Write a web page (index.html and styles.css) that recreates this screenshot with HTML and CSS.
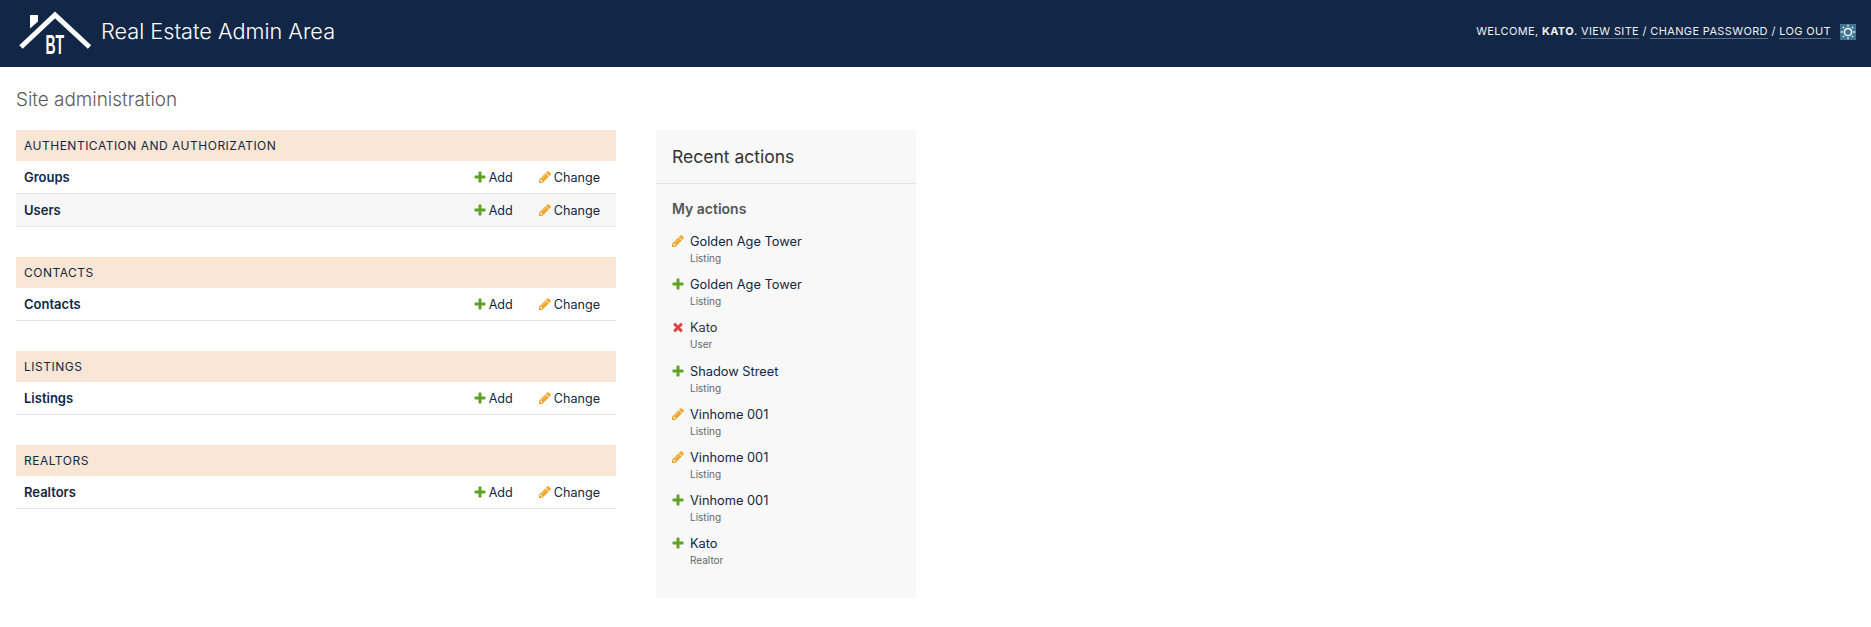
FILE: index.html
```html
<!DOCTYPE html>
<html lang="en">
<head>
<meta charset="utf-8">
<title>Site administration</title>
<link rel="stylesheet" href="styles.css">
</head>
<body>
<svg class="defs" width="0" height="0" aria-hidden="true">
  <symbol id="i-add" viewBox="0 0 1792 1792"><path d="M1600 796v192q0 40-28 68t-68 28h-416v416q0 40-28 68t-68 28h-192q-40 0-68-28t-28-68v-416h-416q-40 0-68-28t-28-68v-192q0-40 28-68t68-28h416v-416q0-40 28-68t68-28h192q40 0 68 28t28 68v416h416q40 0 68 28t28 68z"/></symbol>
  <symbol id="i-change" viewBox="0 0 1792 1792"><path d="M491 1536l91-91-235-235-91 91v107h128v128h107zm523-928q0-22-22-22-10 0-17 7l-542 542q-7 7-7 17 0 22 22 22 10 0 17-7l542-542q7-7 7-17zm-54-192l416 416-832 832h-416v-416zm683 96q0 53-37 90l-166 166-416-416 166-165q36-38 90-38 53 0 91 38l235 234q37 39 37 91z"/></symbol>
  <symbol id="i-del" viewBox="0 0 1792 1792"><path d="M1490 1322q0 40-28 68l-136 136q-28 28-68 28t-68-28l-294-294-294 294q-28 28-68 28t-68-28l-136-136q-28-28-28-68t28-68l294-294-294-294q-28-28-28-68t28-68l136-136q28-28 68-28t68 28l294 294 294-294q28-28 68-28t68 28l136 136q28 28 28 68t-28 68l-294 294 294 294q28 28 28 68z"/></symbol>
</svg>

<header class="topbar">
  <div class="brand">
    <svg class="logo" viewBox="0 0 74 44" width="74" height="44" aria-hidden="true">
      <polygon points="12,5 20,5 20,11.5 12,18.5" fill="#fff"/>
      <polyline points="3,37 37,5 71.5,37" fill="none" stroke="#fff" stroke-width="5"/>
      <text class="logo-text" transform="translate(27.5 43.5) scale(.5 1)">BT</text>
    </svg>
    <span class="brand-name">Real Estate Admin Area</span>
  </div>
  <div class="tools">
    <div class="tool-links">Welcome, <strong>Kato</strong>. <a href="#">View site</a> / <a href="#">Change password</a> / <a href="#">Log out</a></div>
    <span class="theme">
      <svg viewBox="0 0 16 16" width="16" height="16" aria-hidden="true">
        <circle cx="8" cy="8" r="3.6" fill="none" stroke="#fff" stroke-width="1.5"/>
        <g stroke="#e8f0f4" stroke-width="1.3">
          <path d="M8 .8v2M8 13.2v2M.8 8h2M13.2 8h2M2.9 2.9l1.3 1.3M11.8 11.8l1.3 1.3M2.9 13.1l1.3-1.3M11.8 4.2l1.3-1.3"/>
        </g>
      </svg>
    </span>
  </div>
</header>

<main class="content">
  <h1 class="page-title">Site administration</h1>
  <div class="columns">
    <div class="apps">
      <section class="module">
        <h2 class="caption">Authentication and Authorization</h2>
        <div class="row"><span class="model">Groups</span><a class="act act-add" href="#"><svg class="ico add"><use href="#i-add"/></svg>Add</a><a class="act act-change" href="#"><svg class="ico change"><use href="#i-change"/></svg>Change</a></div>
        <div class="row alt"><span class="model">Users</span><a class="act act-add" href="#"><svg class="ico add"><use href="#i-add"/></svg>Add</a><a class="act act-change" href="#"><svg class="ico change"><use href="#i-change"/></svg>Change</a></div>
      </section>
      <section class="module">
        <h2 class="caption">Contacts</h2>
        <div class="row"><span class="model">Contacts</span><a class="act act-add" href="#"><svg class="ico add"><use href="#i-add"/></svg>Add</a><a class="act act-change" href="#"><svg class="ico change"><use href="#i-change"/></svg>Change</a></div>
      </section>
      <section class="module">
        <h2 class="caption">Listings</h2>
        <div class="row"><span class="model">Listings</span><a class="act act-add" href="#"><svg class="ico add"><use href="#i-add"/></svg>Add</a><a class="act act-change" href="#"><svg class="ico change"><use href="#i-change"/></svg>Change</a></div>
      </section>
      <section class="module">
        <h2 class="caption">Realtors</h2>
        <div class="row"><span class="model">Realtors</span><a class="act act-add" href="#"><svg class="ico add"><use href="#i-add"/></svg>Add</a><a class="act act-change" href="#"><svg class="ico change"><use href="#i-change"/></svg>Change</a></div>
      </section>
    </div>

    <aside class="recent">
      <h2 class="recent-title">Recent actions</h2>
      <div class="recent-body">
        <h3 class="my-actions">My actions</h3>
        <ul class="action-list">
          <li><svg class="ico change"><use href="#i-change"/></svg><div class="entry"><a href="#">Golden Age Tower</a><span class="kind">Listing</span></div></li>
          <li><svg class="ico add"><use href="#i-add"/></svg><div class="entry"><a href="#">Golden Age Tower</a><span class="kind">Listing</span></div></li>
          <li><svg class="ico del"><use href="#i-del"/></svg><div class="entry"><span class="plain">Kato</span><span class="kind">User</span></div></li>
          <li><svg class="ico add"><use href="#i-add"/></svg><div class="entry"><a href="#">Shadow Street</a><span class="kind">Listing</span></div></li>
          <li><svg class="ico change"><use href="#i-change"/></svg><div class="entry"><a href="#">Vinhome 001</a><span class="kind">Listing</span></div></li>
          <li><svg class="ico change"><use href="#i-change"/></svg><div class="entry"><a href="#">Vinhome 001</a><span class="kind">Listing</span></div></li>
          <li><svg class="ico add"><use href="#i-add"/></svg><div class="entry"><a href="#">Vinhome 001</a><span class="kind">Listing</span></div></li>
          <li><svg class="ico add"><use href="#i-add"/></svg><div class="entry"><a href="#">Kato</a><span class="kind">Realtor</span></div></li>
        </ul>
      </div>
    </aside>
  </div>
</main>
</body>
</html>
```

FILE: styles.css
```css
* { box-sizing: border-box; }
html, body { margin: 0; padding: 0; }
body {
  font-family: Inter, "Liberation Sans", sans-serif;
  font-size: 14px;
  color: #333;
  background: #fff;
}
a { color: inherit; text-decoration: none; }
.defs { position: absolute; }

.topbar {
  height: 67px;
  background: #122645;
  color: #fff;
  display: flex;
  align-items: center;
  justify-content: space-between;
  padding: 0 15px 0 18px;
}
.brand { display: flex; align-items: center; gap: 10px; }
.logo { display: block; margin-top: -4px; overflow: visible; }
.logo-text {
  font-family: "Liberation Sans", sans-serif;
  font-weight: 700;
  font-size: 28px;
  fill: #fff;
}
.brand-name { font-size: 21.7px; font-weight: 350; margin-top: -6px; margin-left: -1px; }
.tools {
  display: flex;
  align-items: center;
  gap: 9px;
  margin-top: -4px;
}
.tool-links {
  font-size: 11px;
  line-height: 14px;
  letter-spacing: 0.36px;
  text-transform: uppercase;
  color: #eef1f5;
  margin-top: -2px;
}
.tool-links strong { font-weight: 700; }
.tool-links a { border-bottom: 1px solid #5c6e85; }
.theme {
  width: 16px;
  height: 16px;
  background: #417690;
  display: block;
}
.theme svg { display: block; }

.content { padding: 21px 16px 0; }
.page-title {
  margin: 0 0 19px;
  font-size: 18.9px;
  line-height: 23px;
  font-weight: 300;
  color: #5a5a5a;
}
.columns { display: flex; align-items: flex-start; gap: 40px; }
.apps { width: 600px; }
.module { margin-bottom: 30px; }
.caption {
  margin: 0;
  height: 31px;
  padding: 0 8px;
  display: flex;
  align-items: center;
  background: #f9e6d4;
  color: #122645;
  font-size: 12px;
  font-weight: 400;
  letter-spacing: 0.5px;
  text-transform: uppercase;
}
.row {
  height: 33px;
  display: flex;
  align-items: center;
  padding: 0 16px 0 8px;
  border-bottom: 1px solid #e5e5e5;
  color: #122645;
  font-size: 12.6px;
}
.row.alt { background: #f6f6f6; }
.model { font-weight: 600; flex: 1; font-size: 13px; }
.act { display: flex; align-items: center; }
.act-add { margin-right: 25px; }
.ico { width: 14px; height: 14px; flex: none; margin-right: 2px; margin-top: -1px; }
.add { fill: #5fa225; }
.change { fill: #efa62c; }
.del { fill: #dd4646; }

.recent {
  width: 260px;
  height: 468px;
  background: #f8f8f8;
}
.recent-title {
  margin: 0;
  height: 54px;
  padding: 0 16px;
  display: flex;
  align-items: center;
  border-bottom: 1px solid #e2e2e2;
  font-size: 17.5px;
  font-weight: 400;
  color: #333;
}
.recent-body { padding: 16px 16px 0; }
.my-actions {
  margin: 0 0 15px;
  font-size: 14px;
  line-height: 18px;
  font-weight: 600;
  color: #555;
}
.action-list { list-style: none; margin: 0; padding: 0; }
.action-list li {
  height: 43.2px;
  display: flex;
  gap: 5px;
}
.action-list .ico { margin: 1px 0 0 -1px; }
.entry { padding-top: 1px; }
.action-list a, .plain {
  display: block;
  font-size: 12.8px;
  line-height: 16px;
  color: #122645;
}
.plain { color: #333; }
.kind {
  display: block;
  font-size: 10px;
  line-height: 14px;
  margin-top: 1px;
  color: #666;
}
```
